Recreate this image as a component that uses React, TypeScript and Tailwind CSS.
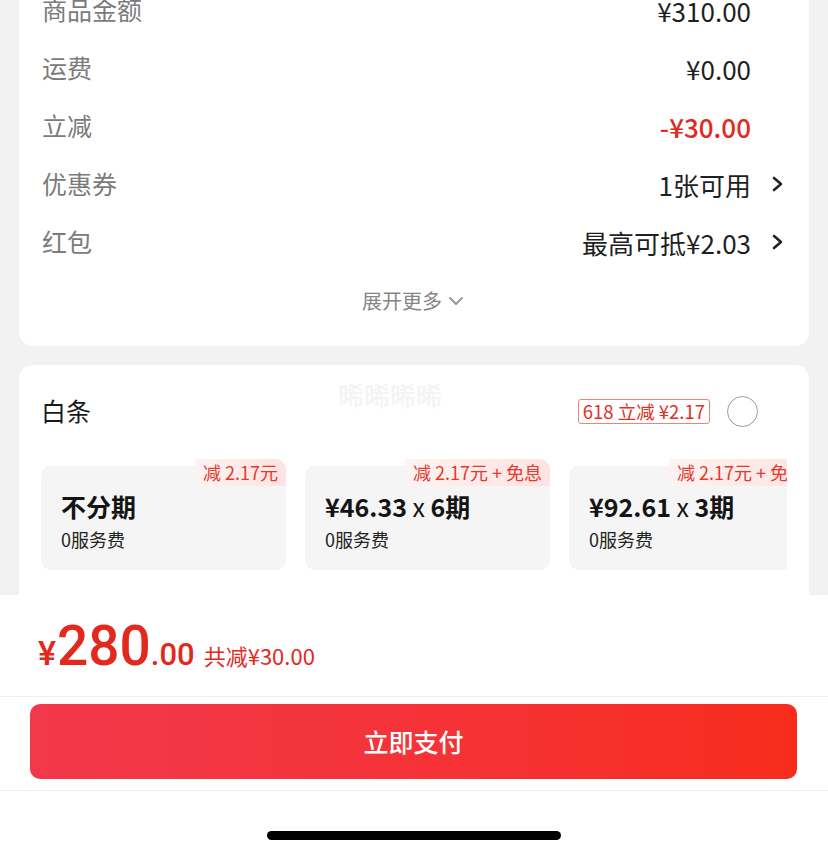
const ChevronRight = () => (
  <svg width="13" height="16" viewBox="0 0 13 16" fill="none">
    <path d="M3 2 L10 8 L3 14" stroke="#222" strokeWidth="2.6" strokeLinecap="round" strokeLinejoin="round" />
  </svg>
);

const rows = [
  { label: "商品金额", value: "¥310.00" },
  { label: "运费", value: "¥0.00" },
  { label: "立减", value: "-¥30.00", red: true },
  { label: "优惠券", value: "1张可用", arrow: true },
  { label: "红包", value: "最高可抵¥2.03", arrow: true },
];

const plans = [
  { tag: "减 2.17元", main: "不分期" },
  { tag: "减 2.17元 + 免息", amount: "¥46.33", periods: "6期" },
  { tag: "减 2.17元 + 免息", amount: "¥92.61", periods: "3期" },
];

const App = () => {
  return (
    <div
      className="w-[828px] h-[856px] bg-[#f2f2f2] flex flex-col overflow-hidden"
      style={{ fontFamily: '"Noto Sans CJK SC", "Noto Sans", sans-serif' }}
    >
      <div className="h-[595px] shrink-0 overflow-hidden px-[19px]">
        <div className="-mt-[19px] bg-white rounded-b-[14px] pl-[23px] pr-[25px]">
          {rows.map((r) => (
            <div key={r.label} className="h-[58px] flex items-center justify-between">
              <span className="text-[25px] text-[#7b7b7b]">{r.label}</span>
              <div className="flex items-center">
                <span className={`text-[26px] ${r.red ? "text-[#e3291d] font-medium" : "text-[#1f1f1f]"}`}>{r.value}</span>
                <div className="w-[33px] flex justify-end">{r.arrow && <ChevronRight />}</div>
              </div>
            </div>
          ))}
          <div className="h-[60px] flex items-center justify-center gap-[6px]">
            <span className="text-[20px] text-[#858585]">展开更多</span>
            <svg width="16" height="10" viewBox="0 0 16 10" fill="none">
              <path d="M2 2 L8 8 L14 2" stroke="#999" strokeWidth="2" strokeLinecap="round" strokeLinejoin="round" />
            </svg>
          </div>
          <div className="h-[15px]" />
        </div>

        <div className="mt-[19px] bg-white rounded-[14px] px-[22px] pt-[22px] h-[420px]">
          <div className="h-[48px] flex items-center justify-between relative">
            <span className="text-[25px] text-[#1a1a1a]">白条</span>
            <span className="absolute left-[297px] -top-[12px] text-[26px] text-[#f4f4f4] font-medium">晞晞晞晞</span>
            <div className="flex items-center gap-[17px] pr-[29px]">
              <span className="h-[25px] flex items-center px-[4px] border border-[#e98579] rounded-[3px] text-[18.5px] text-[#e1301f] leading-none">
                618 立减 ¥2.17
              </span>
              <span className="w-[31px] h-[31px] rounded-full border-[1.5px] border-[#9a9a9a]" />
            </div>
          </div>

          <div className="mt-[24px] pt-[7px] overflow-hidden">
            <div className="flex gap-[19px]">
              {plans.map((p, i) => (
                <div key={i} className="relative w-[245px] h-[104px] shrink-0 bg-[#f5f5f5] rounded-[10px] pl-[20px] pt-[24px]">
                  <span className="absolute -top-[7px] right-0 h-[27px] flex items-center pl-[8px] pr-[8px] rounded-tr-[10px] rounded-bl-[10px] bg-gradient-to-l from-[#fde3e1] to-[#fdf3f2] text-[18px] text-[#e4392c] whitespace-nowrap">
                    {p.tag}
                  </span>
                  <div className="leading-[32px] text-[25px] text-[#141414]">
                    {p.main ? (
                      <span className="font-bold">{p.main}</span>
                    ) : (
                      <>
                        <span className="font-semibold">{p.amount}</span>
                        <span className="font-normal"> x </span>
                        <span className="font-semibold">{p.periods}</span>
                      </>
                    )}
                  </div>
                  <div className="mt-[4px] leading-[26px] text-[18px] text-[#222]">0服务费</div>
                </div>
              ))}
            </div>
          </div>
        </div>
      </div>

      <div className="flex-1 bg-white flex flex-col">
        <div className="h-[101px] flex items-baseline pl-[38px] pt-[24px] text-[#e3291d]">
          <span className="text-[34px] font-medium" style={{ fontFamily: "Roboto, sans-serif" }}>¥</span>
          <span className="ml-[1px] text-[55px] font-medium leading-none" style={{ fontFamily: "Roboto, sans-serif" }}>280</span>
          <span className="text-[31px] font-medium" style={{ fontFamily: "Roboto, sans-serif" }}>.00</span>
          <span className="ml-[9px] text-[22px]">共减¥30.00</span>
        </div>
        <div className="border-t border-b border-[#f0f0f0] pt-[7px] pb-[11px] px-[30px]">
          <button className="w-[767px] h-[75px] rounded-[10px] bg-gradient-to-r from-[#f2384b] to-[#f72c1b] text-white text-[25px] font-medium">
            立即支付
          </button>
        </div>
        <div className="flex-1 flex justify-center pt-[40px]">
          <div className="w-[294px] h-[9px] rounded-full bg-black" />
        </div>
      </div>
    </div>
  );
};

export default App;
